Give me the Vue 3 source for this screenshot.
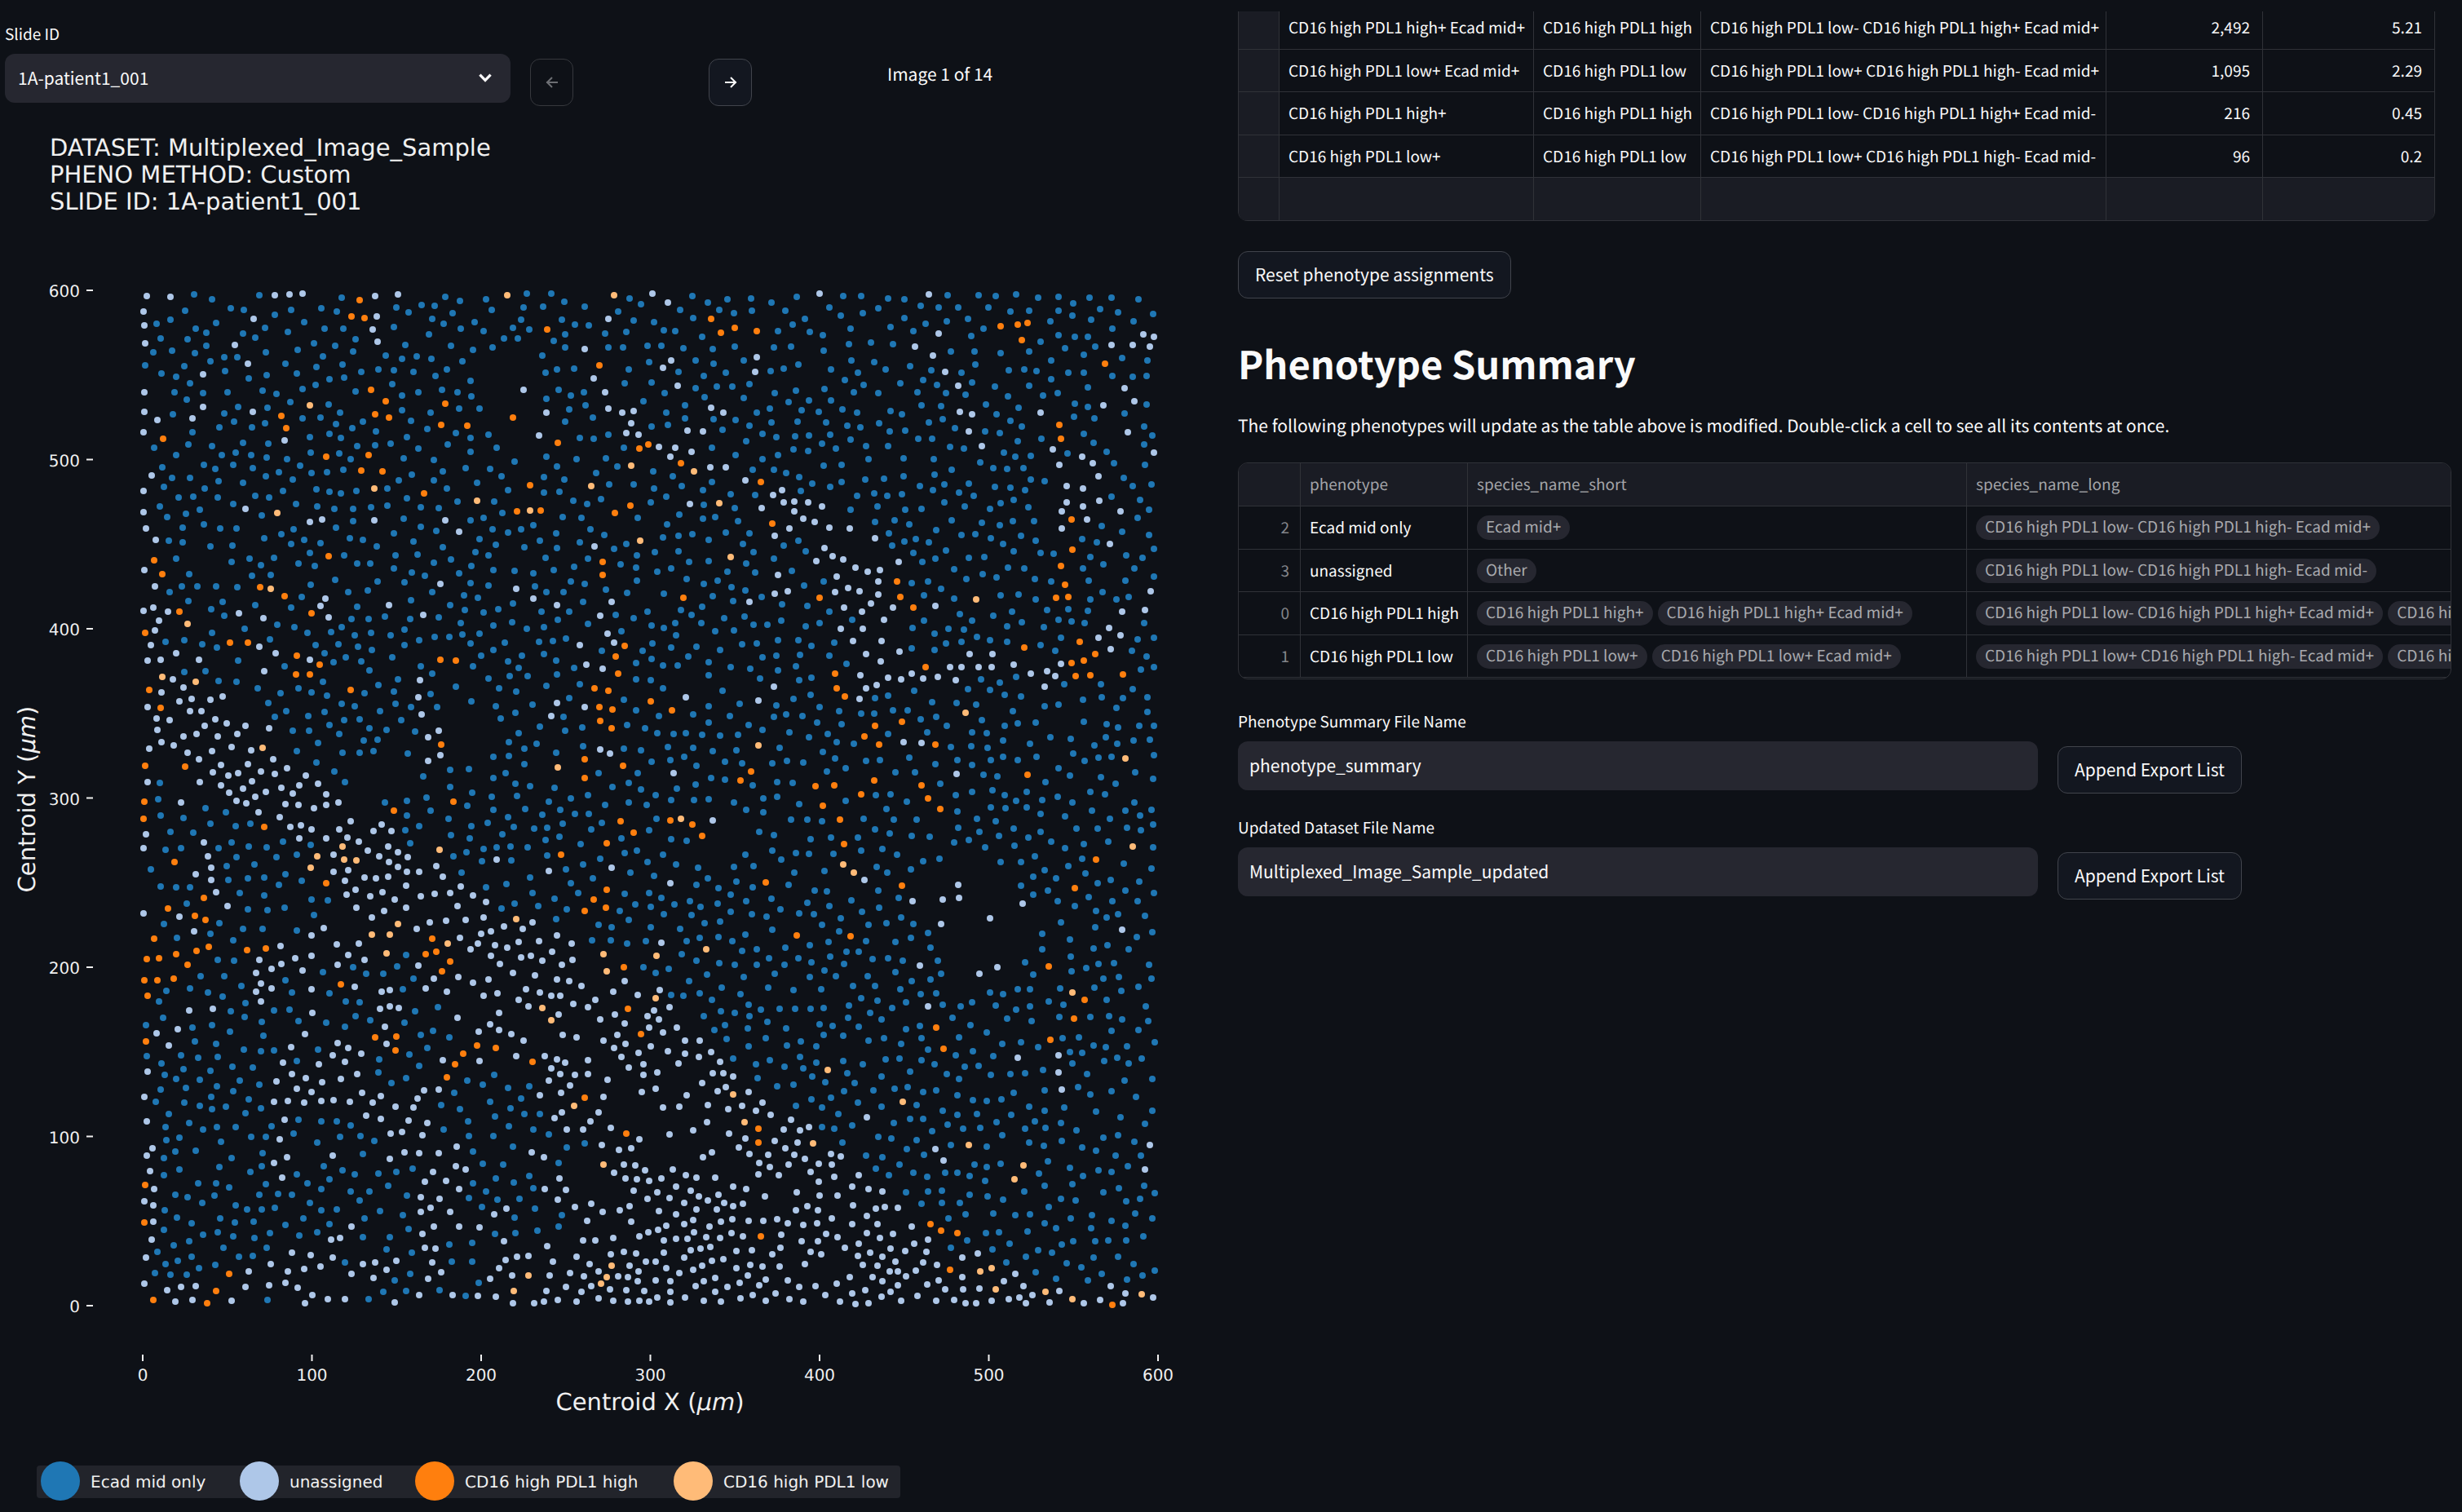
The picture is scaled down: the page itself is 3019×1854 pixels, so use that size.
<script setup>
import { ref } from 'vue'

const slide = ref('1A-patient1_001')
const summaryName = ref('phenotype_summary')
const datasetName = ref('Multiplexed_Image_Sample_updated')

const assignments = [
  ['CD16 high PDL1 high+ Ecad mid+', 'CD16 high PDL1 high', 'CD16 high PDL1 low- CD16 high PDL1 high+ Ecad mid+', '2,492', '5.21'],
  ['CD16 high PDL1 low+ Ecad mid+', 'CD16 high PDL1 low', 'CD16 high PDL1 low+ CD16 high PDL1 high- Ecad mid+', '1,095', '2.29'],
  ['CD16 high PDL1 high+', 'CD16 high PDL1 high', 'CD16 high PDL1 low- CD16 high PDL1 high+ Ecad mid-', '216', '0.45'],
  ['CD16 high PDL1 low+', 'CD16 high PDL1 low', 'CD16 high PDL1 low+ CD16 high PDL1 high- Ecad mid-', '96', '0.2'],
  ['', '', '', '', ''],
]
const summary = [
  { id: 2, name: 'Ecad mid only', short: ['Ecad mid+'], long: ['CD16 high PDL1 low- CD16 high PDL1 high- Ecad mid+'] },
  { id: 3, name: 'unassigned', short: ['Other'], long: ['CD16 high PDL1 low- CD16 high PDL1 high- Ecad mid-'] },
  { id: 0, name: 'CD16 high PDL1 high', short: ['CD16 high PDL1 high+', 'CD16 high PDL1 high+ Ecad mid+'], long: ['CD16 high PDL1 low- CD16 high PDL1 high+ Ecad mid+', 'CD16 high PDL1 low- CD16 high PDL1 high+ Ecad mid-'] },
  { id: 1, name: 'CD16 high PDL1 low', short: ['CD16 high PDL1 low+', 'CD16 high PDL1 low+ Ecad mid+'], long: ['CD16 high PDL1 low+ CD16 high PDL1 high- Ecad mid+', 'CD16 high PDL1 low+ CD16 high PDL1 high- Ecad mid-'] },
]

const ticks = [0, 100, 200, 300, 400, 500, 600]
const X0 = 169
const Y0 = 1451
const UNIT = 2.075
const BLUE = '#1f77b4'
const LAVENDER = '#aec7e8'
const ORANGE = '#ff7f0e'
const PEACH = '#ffbb78'
const legend = [
  { label: 'Ecad mid only', color: BLUE, x: 68 },
  { label: 'unassigned', color: LAVENDER, x: 312 },
  { label: 'CD16 high PDL1 high', color: ORANGE, x: 527 },
  { label: 'CD16 high PDL1 low', color: PEACH, x: 844 },
]

// Cell centroids of the slide's four tiles, as x,y pairs on each tile's own grid.
// "gaps" are the tissue areas without "Ecad mid only" cells.
const TILE = 1568
const tiles = [
  {
    x: -6, y: 180,
    orange: '921,91 902,140 934,145 1402,178 1537,285 952,356 988,391 961,430 997,438 1141,399 1131,461 1197,462 1316,440 1431,514 722,435 733,471 419,502 836,554 944,550 927,595 980,599 1088,663 1359,640 1326,717 1387,715 843,848 396,860 416,902 666,942 729,967 798,1019 459,1014 373,1075 590,1104 635,1104 760,1143 820,1170 759,1200 794,1200 382,1245 411,1297 900,1245 1129,1155 1169,1157 1132,1406 373,1469 475,1471 1544,865 1545,905 1524,1239 1560,1247 1536,1295 1538,1337 1567,1359 1498,1450 1498,1506',
    peach: '1300,77 794,403 959,648 1223,685 1358,714 1515,642 710,722 695,946 481,1049 417,1206 501,1220 673,1417 1429,1473',
    lavender: '376,79 437,82 704,77 742,74 775,73 961,79 1020,75 367,126 370,167 373,220 651,146 603,224 636,280 521,310 966,139 955,179 967,214 1560,147 1498,237 1521,323 1552,365 1343,358 1400,425 1381,493 371,365 370,421 403,446 367,483 494,442 521,407 649,421 730,506 389,611 369,657 367,720 374,767 399,800 371,889 398,939 630,709 795,748 826,741 959,742 1142,742 1176,776 1525,820 1128,931 1323,946 1367,975 1427,995 1538,1026 998,993 1086,1024 835,974 822,997 842,1031 613,1018 675,1033 369,1010 393,1001 430,1012 407,1039 397,1068 387,1111 452,1135 379,1158 411,1155 511,1155 665,1116 706,1135 794,1156 678,1189 444,1213 471,1237 414,1252 460,1279 492,1271 539,1273 570,1265 378,1295 488,1308 516,1307 402,1328 434,1335 552,1332 525,1350 582,1344 630,1351 690,1357 403,1364 471,1382 504,1375 559,1382 609,1375 413,1398 446,1408 382,1419 480,1430 543,1425 593,1413 644,1423 511,1451 566,1467 635,1464 700,1451 736,1476 546,1488 585,1497 611,1491 668,1486 704,1493 784,1498 378,1517 512,1517 567,1528 646,1514 623,1537 588,1548 682,1547 721,1534 767,1528 815,1522 654,1560 751,1551 837,1554 1076,1217 1072,1266 1080,1318 1125,1365 1097,1385 1130,1437 1097,1455 1427,1284 1413,1321 1499,1296 1486,1112 1503,1170 1545,1182 1558,1078 1538,1420 1564,1434 1559,412',
    gaps: ['1215,250 1385,200 1390,470 1420,540 1345,575 1290,520 1250,430 1205,340', '430,1200 620,1225 750,1420 900,1568 440,1568 350,1400 400,1290', '500,790 570,860 540,960 500,930 470,830', '600,1000 740,990 700,1060', '1120,1300 1260,1280 1300,1400 1160,1500', '880,1470 1080,1440 1060,1568 900,1568'],
  },
  {
    x: 734, y: 180,
    orange: '277,146 301,187 337,173 392,183 1018,169 1062,163 1088,160 1073,210 1285,279 1169,461 1173,502 116,518 93,531 198,573 404,630 69,699 30,721 432,753 1200,741 1202,829 1172,878 1183,934 1160,971 1192,970 752,923 760,970 794,1002 553,973 205,973 54,1114 32,1146 38,1196 13,1247 23,1302 122,1279 175,1305 20,1359 1078,1120 1221,1103 1261,1139 1231,1158 1199,1165 1211,1204 1249,1201 1332,1200 825,1178 593,1197 597,1239 618,1263 766,1338 697,1352 668,1383 706,1407 851,1406 51,1470 378,1487 351,1513 543,1529 592,1527 695,1513 660,1554 815,1527 833,1566 1088,1495',
    peach: '28,77 72,581 232,599 297,692 95,803 326,852 956,978 929,1313 397,1409 1337,1447',
    lavender: '125,73 166,98 554,73 834,75 860,190 798,229 845,256 877,305 909,346 1383,192 1412,200 1303,224 1357,224 1400,230 13,147 173,271 152,293 392,260 388,304 190,345 276,411 308,425 5,365 13,412 48,425 77,420 71,455 59,485 90,489 216,477 255,481 143,525 184,528 171,555 226,540 274,587 314,587 364,625 913,422 945,429 936,479 971,523 1120,424 1336,352 1362,391 1282,403 1344,482 1411,543 1153,532 1228,555 1254,573 1168,580 1269,612 1188,641 1230,649 1187,690 1271,686 1175,717 1230,703 1326,716 1240,741 1175,767 1298,812 457,654 434,669 462,691 489,688 525,690 561,702 490,717 405,707 222,695 512,738 541,749 579,764 631,768 477,766 439,788 697,795 566,824 587,850 615,859 545,863 757,866 645,883 677,896 709,890 597,909 705,924 447,904 628,943 656,952 593,956 705,963 438,959 472,952 374,984 21,984 685,990 617,1001 663,1012 743,1001 851,997 719,1037 608,1063 664,1064 639,1100 713,1099 674,1138 759,1132 711,1160 659,1201 11,1079 27,1105 730,1209 763,1213 791,1197 819,1211 858,1207 904,1215 701,1231 674,1240 656,1271 889,1177 918,1177 961,1178 996,1176 938,1139 998,1139 1051,1171 1096,1197 1137,1190 1158,1203 1173,1168 1131,1234 1403,954 1388,1008 1330,1014 1296,1061 1326,1083 1269,1090 1300,1123 437,1234 398,1277 211,1266 769,1399 815,1401 20,1434 179,1491 905,1494',
    gaps: ['500,180 560,260 560,360 520,390 500,330', '430,640 560,680 720,800 720,900 640,950 560,890 480,760', '640,950 740,950 760,1100 740,1180 640,1130', '880,1130 1010,1130 1010,1190 700,1250 640,1230', '1170,580 1230,600 1240,690 1190,760', '140,1180 260,1190 300,1280 180,1330', '1100,620 1160,640 1150,850 1110,830'],
  },
  {
    x: -6, y: 820,
    orange: '371,31 367,83 1162,32 1010,58 677,107 447,210 836,272 522,317 431,347 500,369 526,382 396,437 376,497 408,494 452,482 503,474 535,461 634,470 681,465 481,514 371,560 404,560 446,554 378,606 374,741 873,571 1109,436 1092,483 1119,476 1154,504 1134,533 961,728 1016,726 1014,767 1224,753 1271,761 1187,776 1167,809 1145,846 1366,801 1439,189 1555,155 1555,291 1523,320 1498,355 1554,344 1500,906 372,1164 371,1276 588,1427 553,1478 393,1506 531,1515',
    peach: '879,163 813,192 883,203 914,206 796,227 1126,174 1021,394 953,424 999,424 990,480 1147,452 1324,378 1547,483 1556,533 1391,642 1413,678 1472,931 1547,1105 1354,1433 1318,1479 1556,1437 1540,1456 1567,1405',
    lavender: '588,5 682,4 606,30 632,37 464,34 731,38 765,42 751,8 837,10 805,51 836,42 867,34 663,63 717,77 744,105 771,101 799,114 768,140 836,140 869,113 898,89 891,137 919,149 957,118 979,98 1004,119 374,128 369,169 522,151 533,193 542,227 541,262 555,299 583,340 501,245 943,176 972,192 996,165 1021,182 1046,196 998,211 1020,224 1044,238 1074,238 855,188 856,240 893,235 884,265 934,256 964,259 996,254 1041,279 1118,222 1136,254 912,293 889,307 949,312 980,299 1011,320 914,344 984,355 1042,345 953,374 1078,311 1114,305 1154,301 1182,283 1213,309 1245,327 1172,340 1069,408 1101,388 1144,384 1194,380 1240,373 1233,422 1259,414 1293,400 1340,408 1365,388 1180,434 1225,451 1206,469 1268,455 1301,464 1330,446 1381,443 1427,426 1465,451 1273,202 1407,237 1259,487 1282,511 1335,491 1362,488 1391,501 1416,476 1440,513 1468,500 1073,517 1112,555 1175,551 1092,583 1146,594 1212,567 1252,558 1315,539 1371,546 1428,558 1460,561 1491,577 1239,606 1275,598 1349,586 1385,597 1414,605 1437,606 1330,617 1355,638 1469,630 1507,640 1526,618 1432,662 1538,676 1173,670 1280,656 1256,689 1228,711 1280,708 1310,718 1343,739 1442,721 1478,728 1548,737 1135,797 1229,799 1323,783 1397,783 1427,794 1449,803 1507,797 1413,819 1437,836 1474,839 1508,837 1407,857 1461,871 1438,892 1383,900 1557,854 1548,905 1441,951 1422,968 1535,950 1514,977 1453,1001 1494,1002 1565,997 369,361 460,371 497,415 831,405 799,427 863,454 920,451 720,459 757,494 799,487 892,485 865,513 934,499 665,499 721,511 696,527 657,539 775,531 668,570 657,594 696,584 799,585 909,580 978,594 1000,589 669,622 800,656 974,644 999,636 1023,641 987,696 990,747 545,643 486,650 455,705 401,716 432,752 378,831 371,904 377,976 391,1056 377,1079 384,1124 395,1178 371,1213 394,1225 394,1273 389,1327 374,1380 371,1457 781,718 747,758 865,746 893,760 852,781 927,776 885,802 818,808 726,803 748,836 784,850 709,858 826,861 874,851 916,836 762,881 798,889 928,893 703,918 739,916 780,921 823,917 855,915 897,920 955,922 977,902 939,960 977,970 729,972 717,1029 852,1079 736,1084 703,1099 723,1144 1014,934 1060,937 1070,909 1088,886 1125,882 1048,974 1096,981 1030,1008 1001,1014 1082,1018 1000,1087 1038,1068 1074,1071 1124,1071 1171,1052 1168,1110 1194,1120 1110,1126 1090,1156 1144,1153 1177,1177 1079,1202 1127,1206 1104,1233 1078,1245 1154,1245 1113,1289 1177,1287 1229,1290 1082,1310 1090,1352 1117,1353 1108,1394 1132,1424 1097,1443 1267,1253 1299,1235 1291,1331 1403,1346 1363,1068 1394,1082 1434,1146 1396,1176 1450,1180 1431,1209 1473,1230 1516,1220 1545,1245 1506,1272 1543,1048 1494,1329 1527,1329 902,1289 848,1326 871,1323 749,1366 797,1372 853,1381 822,1406 694,1399 738,1420 780,1413 637,1420 901,1427 931,1399 962,1394 1016,1389 992,1416 957,1441 630,1466 690,1462 732,1454 764,1469 801,1490 840,1502 884,1502 781,1515 428,1477 464,1466 502,1464 449,1509 494,1506 594,1508 1011,1513 1075,1490 1161,1491 1225,1493 1271,1495 1257,1443 1313,1434 1279,1412 1296,1388 1326,1377 1354,1375 1418,1392 1478,1378 1511,1399 1462,1426 1410,1433 1496,1436 1534,1420 1451,1467 1400,1478 1491,1482 1515,1464 1563,1475 1315,1514 1370,1515 1394,1511 1429,1505 1478,1510 1534,1500',
    gaps: ['560,0 900,0 1050,200 1200,300 1180,540 1060,530 1040,400 860,310 850,200 720,90', '1180,350 1490,390 1568,560 1568,1010 1460,1010 1450,820 1380,840 1300,830 1130,700 1180,560', '860,330 960,380 930,520 850,510 780,460', '680,850 930,780 960,960 700,950', '1080,1010 1180,1050 1190,1160 1130,1200 1180,1300 1070,1270', '1450,1080 1568,1080 1568,1520 1230,1520 1230,1350 1450,1300', '600,1430 980,1400 900,1520 600,1500', '860,0 960,20 980,90 900,90', '1180,680 1360,760 1370,850 1290,840 1190,800'],
  },
  {
    x: 734, y: 820,
    orange: '660,10 562,43 606,85 833,24 863,52 43,89 172,88 227,100 78,124 254,132 9,155 616,158 416,269 765,279 9,291 7,344 1263,203 1208,288 496,426 633,429 1141,519 53,521 1234,618 63,644 97,719 1207,673 1145,735 852,700 871,762 397,998 398,1039 58,1013 838,1282 865,1300 907,1307 403,1318 889,1417 1305,1519',
    peach: '198,83 1357,163 615,217 641,241 264,468 135,488 10,533 0,483 133,613 1202,595 575,826 333,898 767,920 361,979 537,1042 936,1046 1077,1108 1054,1149 22,1406 9,1438 965,1421 995,1411 1006,1474 1134,1482 1203,1502 1380,1488',
    lavender: '280,87 21,227 171,273 669,262 910,277 912,315 869,320 793,326 1074,334 991,376 866,394 1330,410 811,517 1010,522 964,541 833,637 1062,789 1166,782 1167,833 1175,883 149,448 55,563 26,593 88,602 144,588 169,639 130,650 113,665 30,662 142,675 54,688 117,700 189,700 35,721 152,715 1,737 56,748 27,760 121,756 90,775 46,786 166,769 209,739 246,738 209,776 277,771 244,787 103,807 65,818 193,806 299,802 103,840 139,833 280,835 307,835 333,844 11,854 253,863 313,875 98,891 133,880 292,888 372,889 213,899 1,905 267,928 408,921 153,936 194,933 320,942 356,932 391,946 429,957 481,972 675,964 265,979 20,997 169,1016 230,1004 323,1013 363,1027 461,1001 503,1004 527,995 439,1036 497,1040 91,1029 72,1057 39,1062 347,1054 466,1056 278,1068 255,1084 374,1074 423,1077 490,1077 583,1074 608,1080 516,1088 851,1060 872,1093 1401,1046 1389,1119 399,1099 426,1111 474,1106 551,1103 585,1105 53,1105 81,1107 106,1122 28,1129 178,1120 211,1136 238,1144 287,1143 397,1133 449,1136 530,1127 592,1140 655,1136 57,1147 86,1149 117,1154 148,1147 552,1156 186,1170 333,1170 365,1178 78,1182 137,1187 223,1182 294,1193 244,1199 637,1171 679,1177 715,1185 495,1186 113,1205 170,1204 207,1219 268,1212 309,1219 357,1221 333,1227 414,1200 553,1197 601,1197 66,1229 41,1240 142,1242 238,1237 291,1238 523,1227 493,1240 550,1240 639,1225 698,1236 722,1231 754,1233 186,1253 2,1245 71,1273 231,1268 206,1281 161,1285 301,1273 330,1266 373,1271 409,1271 446,1267 472,1278 512,1284 548,1278 585,1265 676,1256 637,1282 703,1280 791,1289 141,1297 272,1288 232,1304 115,1305 91,1318 26,1323 328,1307 571,1309 676,1307 743,1310 455,1313 358,1318 299,1322 264,1320 215,1324 186,1325 155,1330 509,1331 549,1332 601,1320 708,1323 654,1339 833,1327 796,1339 274,1348 249,1354 224,1359 340,1361 380,1359 453,1350 433,1369 530,1363 559,1370 618,1352 736,1353 683,1365 652,1374 773,1360 828,1362 716,1377 52,1364 84,1367 18,1371 155,1365 207,1379 109,1393 133,1393 279,1390 308,1385 377,1401 407,1407 452,1407 516,1398 664,1401 703,1405 748,1391 820,1394 855,1402 67,1403 161,1411 253,1403 229,1415 340,1411 89,1421 195,1426 371,1434 733,1422 755,1421 801,1418 37,1435 62,1438 287,1441 631,1437 689,1437 775,1436 88,1451 134,1447 172,1449 258,1450 349,1454 417,1446 472,1447 716,1451 597,1456 400,1462 318,1466 236,1465 502,1467 544,1464 755,1463 830,1459 859,1447 17,1476 59,1477 104,1478 171,1482 286,1481 637,1485 672,1477 735,1481 875,1474 441,1487 382,1491 568,1492 712,1496 805,1493 139,1499 210,1497 352,1501 476,1503 26,1507 62,1511 92,1508 118,1511 171,1513 257,1507 301,1510 416,1508 513,1511 606,1509 646,1517 680,1514 764,1508 852,1507 899,1505 929,1515 955,1514 920,1379 960,1367 920,1438 1027,1451 1056,1427 921,1475 964,1471 1077,1465 996,1508 1039,1504 1066,1498 1100,1491 1083,1514 1143,1513 1169,1478 1232,1516 1274,1505 1301,1465 1337,1485 1331,1515 1409,1499',
    gaps: ['270,30 340,60 390,80 380,150 330,230 280,270 240,150', '770,250 890,190 1060,220 1070,300 1180,340 1210,380 1100,400 1060,580 880,610 870,480 820,380', '0,540 60,540 230,640 300,760 370,830 480,950 540,1010 700,1170 800,1240 870,1340 890,1430 1100,1450 1420,1450 1420,1520 0,1520'],
  },
]

const parse = (t, text) =>
  text.split(' ').map((pair) => {
    const [x, y] = pair.split(',').map(Number)
    return [t.x + (x * 750) / TILE, t.y + (y * 650) / TILE]
  })

const inside = ([x, y], poly) => {
  let hit = false
  for (let i = 0, j = poly.length - 1; i < poly.length; j = i++) {
    const [xi, yi] = poly[i]
    const [xj, yj] = poly[j]
    if (yi > y !== yj > y && x < ((xj - xi) * (y - yi)) / (yj - yi) + xi) hit = !hit
  }
  return hit
}

const cells = []
const free = (x, y, r) => cells.every((c) => (c.x - x) ** 2 + (c.y - y) ** 2 >= r * r)
const add = (x, y, color) => cells.push({ x: Math.round(x), y: Math.round(y), color })
for (const t of tiles) {
  for (const [kind, color] of [['orange', ORANGE], ['peach', PEACH], ['lavender', LAVENDER]]) {
    for (const [x, y] of parse(t, t[kind])) if (free(x, y, 7)) add(x, y, color)
  }
}

// "Ecad mid only" cells pack the remaining tissue at a near-even spacing.
const gaps = tiles.flatMap((t) => t.gaps.map((g) => parse(t, g)))
let seed = 20231
const random = () => {
  seed = (seed * 1664525 + 1013904223) % 4294967296
  return seed / 4294967296
}
for (let i = 0; i < 20000; i++) {
  const x = 172 + random() * 1238
  const y = 209 + random() * 1236
  if (free(x, y, 14 + random() * 4) && !gaps.some((g) => inside([x, y], g))) add(x, y, BLUE)
}
</script>

<template>
  <main class="page">
    <section class="viewer">
      <div class="toolbar">
        <div class="field">
          <label for="slide">Slide ID</label>
          <div class="select">
            <select id="slide" v-model="slide">
              <option>1A-patient1_001</option>
            </select>
            <svg class="chevron" viewBox="0 0 20 20" aria-hidden="true"><path d="M4 7l6 6 6-6" /></svg>
          </div>
        </div>
        <button class="btn arrow" disabled aria-label="Previous image">
          <svg viewBox="0 0 20 20" aria-hidden="true"><path d="M17 10H3M10 4l-6 6 6 6" /></svg>
        </button>
        <button class="btn arrow" aria-label="Next image">
          <svg viewBox="0 0 20 20" aria-hidden="true"><path d="M3 10h14M10 4l6 6-6 6" /></svg>
        </button>
        <p class="counter">Image 1 of 14</p>
      </div>

      <svg class="plot" viewBox="0 0 1488 1700" role="img" aria-label="Phenotype scatter plot">
        <g class="title">
          <text x="55" y="41">DATASET: Multiplexed_Image_Sample</text>
          <text x="55" y="74">PHENO METHOD: Custom</text>
          <text x="55" y="107">SLIDE ID: 1A-patient1_001</text>
        </g>
        <circle v-for="(c, i) in cells" :key="i" :cx="c.x" :cy="c.y" r="4" :fill="c.color" />
        <g v-for="t in ticks" :key="t" class="tick">
          <path :d="`M100 ${Y0 - t * UNIT}h8M${X0 + t * UNIT} 1511v8`" />
          <text x="92" :y="Y0 - t * UNIT + 8" text-anchor="end">{{ t }}</text>
          <text :x="X0 + t * UNIT" y="1543" text-anchor="middle">{{ t }}</text>
        </g>
        <text class="axis" x="791" y="1579" text-anchor="middle">Centroid X (<tspan class="unit">μm</tspan>)</text>
        <text class="axis" transform="translate(37 830) rotate(-90)" text-anchor="middle">Centroid Y (<tspan class="unit">μm</tspan>)</text>
        <rect class="legend-box" x="39" y="1647" width="1059" height="40" rx="4" />
        <g v-for="l in legend" :key="l.label" class="legend">
          <circle :cx="l.x" cy="1666" r="24" :fill="l.color" />
          <text :x="l.x + 37" y="1674">{{ l.label }}</text>
        </g>
      </svg>
    </section>

    <section class="details">
      <div class="frame assignments">
        <table>
          <colgroup><col class="c-mark" /><col class="c-species" /><col class="c-pheno" /><col class="c-long" /><col class="c-count" /><col /></colgroup>
          <tbody>
            <tr v-for="(row, i) in assignments" :key="i" :class="{ blank: !row[0] }">
              <td class="mark"></td>
              <td v-for="(cell, j) in row" :key="j" :class="{ num: j > 2 }">{{ cell }}</td>
            </tr>
          </tbody>
        </table>
      </div>

      <button class="btn reset">Reset phenotype assignments</button>

      <h2>Phenotype Summary</h2>
      <p class="note">The following phenotypes will update as the table above is modified. Double-click a cell to see all its contents at once.</p>

      <div class="frame summary">
        <table>
          <colgroup><col class="c-index" /><col class="c-pheno" /><col class="c-short" /><col /></colgroup>
          <thead>
            <tr><th></th><th>phenotype</th><th>species_name_short</th><th>species_name_long</th></tr>
          </thead>
          <tbody>
            <tr v-for="row in summary" :key="row.id">
              <td class="index">{{ row.id }}</td>
              <td>{{ row.name }}</td>
              <td><div class="chips"><span v-for="s in row.short" :key="s" class="chip">{{ s }}</span></div></td>
              <td><div class="chips"><span v-for="s in row.long" :key="s" class="chip">{{ s }}</span></div></td>
            </tr>
          </tbody>
        </table>
      </div>

      <div class="exports">
        <div class="export">
          <div class="field">
            <label for="summary-name">Phenotype Summary File Name</label>
            <input id="summary-name" v-model="summaryName" type="text" />
          </div>
          <button class="btn">Append Export List</button>
        </div>
        <div class="export">
          <div class="field">
            <label for="dataset-name">Updated Dataset File Name</label>
            <input id="dataset-name" v-model="datasetName" type="text" />
          </div>
          <button class="btn">Append Export List</button>
        </div>
      </div>
    </section>
  </main>
</template>

<style>
body {
  margin: 0;
  background: #0e1117;
}
</style>

<style scoped>
.page {
  display: grid;
  grid-template-columns: minmax(0, 1fr) minmax(0, 1fr);
  gap: 24px;
  padding: 0 13px 0 6px;
  color: #fafafa;
  font-family: "Noto Sans CJK SC", "Noto Sans", sans-serif;
  font-size: 21px;
  line-height: 32px;
  text-rendering: geometricPrecision;
}
p, h2 { margin: 0; }
input, select, button {
  font: inherit;
  color: inherit;
  box-sizing: border-box;
}
.viewer { padding-top: 30px; }
.toolbar {
  display: grid;
  grid-template-columns: 620fr 195fr 195fr 406fr;
  gap: 24px;
  align-items: start;
  height: 100px;
}
.field label {
  display: block;
  height: 24px;
  margin-bottom: 12px;
  font-size: 19px;
  line-height: 24px;
}
.select { position: relative; }
select, input {
  display: block;
  width: 100%;
  height: 60px;
  padding: 0 14px 2px;
  border: 0;
  border-radius: 12px;
  background: #262730;
  appearance: none;
}
.select select { padding-left: 16px; }
.chevron {
  position: absolute;
  right: 20px;
  top: 18px;
  width: 22px;
  height: 22px;
  pointer-events: none;
}
svg path {
  fill: none;
  stroke: currentColor;
  stroke-width: 3;
}
.btn {
  height: 58px;
  padding: 0 20px 3px;
  border: 1px solid #41444c;
  border-radius: 12px;
  background: #131720;
  justify-self: start;
}
.toolbar .btn, .export .btn { margin-top: 42px; }
.arrow {
  display: flex;
  width: 53px;
  padding: 0;
  align-items: center;
  justify-content: center;
}
.arrow svg { width: 20px; height: 20px; }
.arrow path { stroke-width: 2; }
.arrow:disabled {
  border-color: #36383d;
  background: transparent;
  color: #6c6e73;
}
.counter { margin-top: 45px; }

.plot {
  display: block;
  width: 100%;
  margin-top: 20px;
  font-family: "DejaVu Sans", sans-serif;
  fill: #f0f0f0;
}
.title { font-size: 29px; }
.tick { font-size: 20px; }
.tick path { stroke: #f0f0f0; stroke-width: 2; }
.axis { font-size: 29px; }
.unit { font-style: italic; }
.legend { font-size: 20px; }
.legend-box { fill: #22242b; }

.details { padding-top: 14px; }
.frame { overflow: hidden; }
table {
  width: 100%;
  table-layout: fixed;
  border-collapse: separate;
  border-spacing: 0;
  font-size: 19px;
  line-height: 28px;
}
td, th {
  height: 52px;
  box-sizing: border-box;
  padding: 0 12px 0 11px;
  border-right: 1px solid #303238;
  border-bottom: 1px solid #303238;
  font-weight: 400;
  text-align: left;
  white-space: nowrap;
  overflow: hidden;
}
tr > :last-child { border-right: 0; }
tbody tr:nth-child(odd) td { height: 53px; }
.assignments {
  margin-right: 20px;
  border: solid #303238;
  border-width: 0 1px;
  border-radius: 0 0 12px 12px;
}
.assignments table { margin-top: -6px; }
.mark, .blank td, th { background: #1a1c24; }
td.num { padding-right: 15px; text-align: right; }
.c-mark { width: 50px; }
.c-species { width: 312px; }
.c-pheno { width: 205px; }
.c-long { width: 497px; }
.c-count { width: 192px; }
.c-index { width: 76px; }
.c-short { width: 612px; }
.reset { display: block; margin-top: 37px; }
h2 {
  margin-top: 47px;
  font-size: 47px;
  line-height: 64px;
  font-weight: 700;
}
.note { margin-top: 29px; }
.summary {
  margin-top: 29px;
  border: 1px solid #303238;
  border-radius: 12px;
  padding-bottom: 1px;
}
th { height: 53px; color: #a3a4a8; }
td.index { padding-right: 13px; color: #84868b; text-align: right; }
.chips { display: flex; gap: 6px; }
.chip {
  flex: none;
  padding: 0 11px;
  height: 30px;
  border-radius: 15px;
  background: #262730;
  color: #a9aaae;
}
.exports {
  display: grid;
  gap: 30px;
  margin-top: 40px;
}
.export {
  display: grid;
  grid-template-columns: 67fr 33fr;
  gap: 24px;
  align-items: start;
}
</style>
